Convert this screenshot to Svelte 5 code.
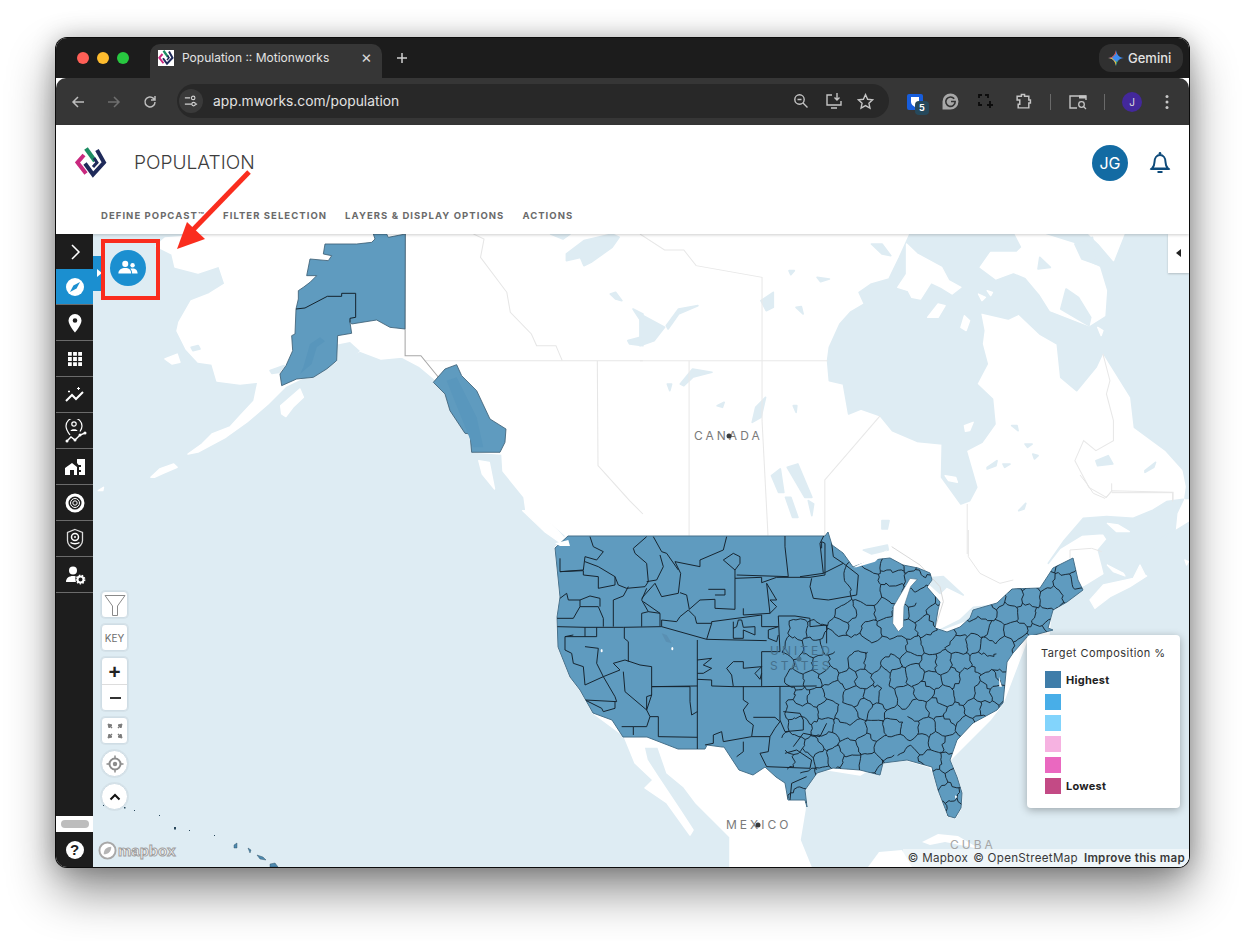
<script>
  const navItems = ['DEFINE POPCAST™', 'FILTER SELECTION', 'LAYERS & DISPLAY OPTIONS', 'ACTIONS'];

  const legend = [
    { color: '#3f7da9', label: 'Highest', tall: true },
    { color: '#48aee8', label: '' },
    { color: '#82d4fc', label: '' },
    { color: '#f6b2e1', label: '' },
    { color: '#ea68c0', label: '' },
    { color: '#c34a85', label: 'Lowest' }
  ];

  // coast outlines, in page pixels
  const land = '156,246 165,238 220,234 1190,234 1190,520 1060,600 1050,640 1027,640 1003,703 990,720 950,760 957,777 962,793 961,808 955,818 948,816 943,803 938,790 933,772 930,767 906,760 880,763 860,775 816,768 805,790 805,810 800,840 811,867 730,867 730,837 710,817 696,803 684,787 667,773 658,747 644,747 647,760 658,777 680,810 693,830 690,835 667,803 645,788 653,780 635,763 624,736 593,713 580,690 570,677 558,647 557,617 560,597 555,548 566,536 549,521 526,511 524,497 503,471 502,454 474,452 470,434 458,414 437,381 419,366 402,357 381,359 360,351 338,361 335,362 286,386 268,404 247,422 226,437 198,452 188,454 202,444 212,434 230,427 240,416 254,401 258,382 240,384 217,381 212,364 198,362 186,349 177,331 179,322 191,301 209,294 225,284 219,266 198,273 175,267 172,254';

  const usa = '568,536 825,536 828,532 832,545 843,553 853,567 872,560 890,558 903,565 918,568 930,573 932,580 927,587 940,602 938,610 935,628 947,632 960,627 970,618 973,610 997,603 1012,589 1040,588 1053,568 1073,558 1078,580 1083,590 1067,602 1053,610 1048,628 1053,630 1027,637 1013,653 1007,662 1003,703 997,710 973,723 957,740 950,760 957,777 962,793 961,808 955,818 948,816 943,803 938,790 933,772 932,767 907,760 883,763 880,775 860,770 833,768 817,773 805,790 807,807 805,800 788,800 785,783 776,777 765,767 753,775 739,770 724,747 722,747 707,745 705,749 678,749 647,737 623,737 612,720 593,713 580,690 570,677 558,647 557,617 560,597 555,548';

  const alaskaMain = '310,0 315,15 305,25 260,30 165,30 160,60 185,65 175,80 120,75 110,125 140,125 120,145 100,160 85,170 85,195 78,225 75,300 65,305 68,350 48,395 30,420 35,455 80,435 130,430 170,405 200,380 203,305 245,298 240,265 245,270 320,258 360,280 405,285 406,0 355,10 350,0';
  const alaskaLine = '78,225 105,222 172,187 215,187 215,178 257,178 257,250 240,253 240,265';
  const alaskaSouth = '490,445 525,405 560,392 575,425 620,470 660,555 708,585 705,625 690,655 605,655 600,600 585,598 540,530 525,480';

  // region borders of the western half, traced at 3x from (540,520)
  const westLines = [
    '50,320 135,322 250,322 365,320 365,300 410,305 420,290 445,270 465,290 470,310 515,310 515,305 665,285',
    '150,50 160,80 190,95 170,120 135,110 130,150 60,155 60,115',
    '60,155 130,152 130,165 175,170 175,205 225,195 225,170 175,140 135,125',
    '225,170 235,195 260,205 315,200 325,185 320,130 285,100 280,85 320,50',
    '340,50 365,95 380,100 415,150',
    '320,185 350,180 370,140 360,105',
    '345,190 365,230 415,220 422,160 405,125 480,140 480,120 550,90 560,50',
    '420,218 440,225 448,268 480,240 525,238 525,265 585,268 585,175 665,172 665,188 710,172 810,172 855,165 855,70 845,65 845,85',
    '585,150 550,120 580,100 600,110 600,130 585,150 585,175',
    '590,165 745,170 735,80 735,47',
    '505,208 555,208 555,225 525,225',
    '610,265 610,285 690,280 680,190 710,240 690,240 710,260 690,280',
    '60,235 80,220 85,240 120,240 120,260 175,260 190,295 190,320',
    '120,240 150,228 180,235 180,260',
    '50,295 100,295 120,260',
    '220,320 220,240 250,228 265,200',
    '305,320 305,280 325,275 305,240 320,205',
    '305,235 345,190',
    '310,245 360,280 360,318',
    '325,275 360,280',
    '135,322 135,350 170,350 170,322',
    '135,350 75,350 100,345',
    '75,350 75,390 95,400 100,430 130,440 135,495 190,470 225,530 230,545 135,540 185,565 190,575 225,565 225,545',
    '135,380 175,385 170,430 190,470 240,450 220,430 255,420 300,435 335,440 335,500 450,500',
    '253,322 253,355 265,365 265,425',
    '335,500 335,525 320,570 255,515 250,455',
    '335,525 320,530 320,570 330,590 355,590 355,650',
    '330,590 320,620 280,620 280,645',
    '245,620 280,620',
    '355,650 472,652',
    '472,360 472,688',
    '365,320 500,358 515,310',
    '500,358 680,362',
    '472,420 515,415 490,435 515,445 490,460 472,460',
    '335,500 472,498',
    '472,478 515,480 515,498 580,500 665,500',
    '450,500 450,545 455,585 472,575',
    '580,500 575,465 560,445 580,425 610,425 610,445 665,440',
    '665,395 665,500 830,498',
    '665,395 720,395 715,288 765,288 810,295 810,320 860,315 860,370',
    '580,305 580,355 610,355 610,330 645,345 645,320 610,322 605,300 595,300 590,320 580,325',
    '665,285 665,320 715,320 685,330 685,355 710,365 715,345',
    '665,440 645,460 660,478 665,460',
    '610,500 610,540 625,550 610,570 620,600 640,615 635,650 550,665 545,635 520,645 520,670 495,675',
    '640,592 705,592 720,605 705,625 690,650 635,650',
    '720,500 720,600 735,635 790,630 790,600 780,580 730,575',
    '610,665 610,695 590,710',
    '690,650 685,695 660,700 680,740 810,745',
    '735,700 770,690 815,720 810,745',
    '750,840 755,790 800,770',
    '760,680 790,640 840,650 860,610'
  ];

  // the dense eastern regions: wobbly voronoi cells, clipped to the coast
  let seed = 41;
  const rnd = () => {
    seed = (seed * 1664525 + 1013904223) % 4294967296;
    return seed / 4294967296;
  };
  const jit = (n) => (rnd() - 0.5) * n;

  function clipCell(poly, a, b) {
    const mx = (a[0] + b[0]) / 2;
    const my = (a[1] + b[1]) / 2;
    const side = (p) => (p[0] - mx) * (b[0] - a[0]) + (p[1] - my) * (b[1] - a[1]);
    const out = [];
    poly.forEach((p, i) => {
      const q = poly[(i + 1) % poly.length];
      const sp = side(p);
      const sq = side(q);
      if (sp <= 0) out.push(p);
      if (sp * sq < 0) {
        const t = sp / (sp - sq);
        out.push([p[0] + (q[0] - p[0]) * t, p[1] + (q[1] - p[1]) * t]);
      }
    });
    return out;
  }

  function wobble(a, b) {
    let d = `M${a[0].toFixed(1)} ${a[1].toFixed(1)}`;
    const steps = Math.max(2, Math.round(Math.hypot(b[0] - a[0], b[1] - a[1]) / 3.5));
    for (let s = 1; s <= steps; s++) {
      const t = s / steps;
      const w = s === steps ? 0 : 3.4;
      d += `L${(a[0] + (b[0] - a[0]) * t + jit(w)).toFixed(1)} ${(a[1] + (b[1] - a[1]) * t + jit(w)).toFixed(1)}`;
    }
    return d;
  }

  function regions() {
    const box = [[760, 525], [1100, 525], [1100, 835], [760, 835]];
    const pts = [];
    for (let j = 0; j < 19; j++) {
      for (let i = 0; i < 19; i++) {
        const x = 765 + i * 18 + (j % 2) * 9 + jit(11);
        const y = 530 + j * 16.5 + jit(10);
        // fewer, larger regions up on the northern plains
        if (x < 880 && y < 610 && (i + j) % 2) continue;
        pts.push([x, y]);
      }
    }
    const seen = new Set();
    let d = '';
    pts.forEach((a) => {
      let cell = box;
      pts.forEach((b) => {
        if (b !== a && Math.hypot(a[0] - b[0], a[1] - b[1]) < 90) cell = clipCell(cell, a, b);
      });
      cell.forEach((p, i) => {
        const q = cell[(i + 1) % cell.length];
        const mx = (p[0] + q[0]) / 2;
        const my = (p[1] + q[1]) / 2;
        const key = `${Math.round(mx)}_${Math.round(my)}`;
        if (seen.has(key)) return;
        seen.add(key);
        if (mx < 785 || (mx < 835 && my < 612) || mx > 1099 || my < 526 || my > 834) return;
        if (rnd() < 0.08) return;
        d += wobble(p, q);
      });
    });
    return d;
  }

  const eastLines = regions();

  const sideIcons = ['compass', 'pin', 'grid', 'trend', 'route', 'house', 'target', 'shield', 'usergear'];
</script>

{#snippet logo()}
  <polyline points="9,8 2.5,15.5 11,26.5" fill="none" stroke="#c9297f" stroke-width="4" />
  <polyline points="11,1.5 20,14" fill="none" stroke="#1c8c62" stroke-width="4.4" />
  <polyline points="22,3 29,15.5 18,27.5 10,16.5" fill="none" stroke="#1f2a5a" stroke-width="4" />
  <polyline points="19,11 22,15.5 18,20" fill="none" stroke="#1f2a5a" stroke-width="3" />
{/snippet}

<div class="page">
  <div class="window">
    <div class="tabstrip">
      <div class="lights">
        <span class="light red"></span>
        <span class="light amber"></span>
        <span class="light green"></span>
      </div>
      <div class="tab">
        <svg class="favicon" viewBox="0 0 32 32" width="16" height="16">
          <rect width="32" height="32" fill="#fff" />
          {@render logo()}
        </svg>
        <span class="tab-title">Population :: Motionworks</span>
        <span class="tab-close">×</span>
      </div>
      <svg class="newtab" viewBox="0 0 12 12" width="12" height="12">
        <path d="M6 1v10M1 6h10" stroke="#d0d0d0" stroke-width="1.5" />
      </svg>
      <div class="gemini">
        <svg viewBox="0 0 16 16" width="16" height="16">
          <path d="M8 0C8.6 4.5 11 7.4 16 8 11 8.6 8.6 11.5 8 16 7.4 11.5 5 8.6 0 8 5 7.4 7.4 4.5 8 0Z" fill="#3f8cf0" />
          <path d="M8 0C7.4 4.5 5 7.4 0 8L4 8 8 4Z" fill="#e8533f" />
          <path d="M0 8C5 8.6 7.4 11.5 8 16L8 12 4 8Z" fill="#f3bd2e" />
          <path d="M8 16C8.6 11.5 11 8.6 12 8L8 12Z" fill="#37a853" />
        </svg>
        <span>Gemini</span>
      </div>
    </div>

    <div class="toolbar">
      <svg class="tool back" viewBox="0 0 16 16" width="16" height="16">
        <path d="M14 8H3M8 3L3 8l5 5" fill="none" stroke="#bdbdbd" stroke-width="1.5" />
      </svg>
      <svg class="tool fwd" viewBox="0 0 16 16" width="16" height="16">
        <path d="M2 8h11M8 3l5 5-5 5" fill="none" stroke="#6f6f6f" stroke-width="1.5" />
      </svg>
      <svg class="tool reload" viewBox="0 0 16 16" width="16" height="16">
        <path d="M13 8a5 5 0 1 1-1.5-3.6L13 6M13 2v4H9" fill="none" stroke="#bdbdbd" stroke-width="1.5" />
      </svg>
      <div class="omnibox">
        <span class="tune">
          <svg viewBox="0 0 16 16" width="14" height="14">
            <path d="M1 4.500h6M1 11.500h8M13 11.500h2" stroke="#d0d0d0" stroke-width="1.300" />
            <circle cx="10.500" cy="4.500" r="2" fill="none" stroke="#d0d0d0" stroke-width="1.300" />
            <circle cx="11" cy="11.500" r="2" fill="none" stroke="#d0d0d0" stroke-width="1.300" />
          </svg>
        </span>
        <span class="url">app.mworks.com/population</span>
        <div class="omni-icons">
          <svg viewBox="0 0 16 16" width="16" height="16">
            <circle cx="6.500" cy="6.500" r="4.700" fill="none" stroke="#c4c4c4" stroke-width="1.400" />
            <path d="M10 10l4.500 4.500M4.500 6.500h4" stroke="#c4c4c4" stroke-width="1.400" />
          </svg>
          <svg class="install" viewBox="0 0 18 18" width="18" height="18">
            <path d="M7 3H2v10h14V9M6 16h6" fill="none" stroke="#c4c4c4" stroke-width="1.400" />
            <path d="M12 1v7M9.500 5.500L12 8l2.500-2.500" fill="none" stroke="#c4c4c4" stroke-width="1.400" />
          </svg>
          <svg viewBox="0 0 16 16" width="17" height="17">
            <path d="M8 1.500l2 4.400 4.700.5-3.500 3.200 1 4.700L8 11.900l-4.200 2.400 1-4.700L1.300 6.400 6 5.900Z" fill="none" stroke="#c4c4c4" stroke-width="1.300" />
          </svg>
        </div>
      </div>
      <div class="ext-icons">
        <span class="ext bitwarden">
          <svg viewBox="0 0 16 16" width="16" height="16">
            <rect width="16" height="16" rx="2" fill="#175ddc" />
            <path d="M4 3h8v5c0 2-2 4-4 5-2-1-4-3-4-5Z" fill="#fff" />
          </svg>
          <span class="badge">5</span>
        </span>
        <svg viewBox="0 0 16 16" width="17" height="17">
          <path d="M8 .5a7.500 7.500 0 1 1 0 15H.5V8A7.500 7.500 0 0 1 8 .5Z" fill="#a8a8a8" />
          <path d="M11.500 5.500A4.400 4.400 0 1 0 12.400 8H8.500" fill="none" stroke="#333" stroke-width="1.500" />
        </svg>
        <svg viewBox="0 0 16 16" width="16" height="16">
          <path d="M1 4V1h3M7 1h3v3M1 8v3h3M12 7v7M9 11h6" fill="none" stroke="#0c0c0c" stroke-width="1.800" />
        </svg>
        <svg class="puzzle" viewBox="0 0 16 16" width="17" height="17">
          <path d="M2 3h4V1.500h3V3h4v3.500h1.500v3H13V14H3v-3.500H4.500v-4H2Z" fill="none" stroke="#c4c4c4" stroke-width="1.400" />
        </svg>
        <span class="sep first"></span>
        <svg class="tabsearch" viewBox="0 0 18 16" width="18" height="16">
          <path d="M8 14H1V2h16v4" fill="none" stroke="#c4c4c4" stroke-width="1.400" />
          <rect x="10" y="1.500" width="7" height="3" fill="#c4c4c4" />
          <circle cx="12.500" cy="10.500" r="2.800" fill="none" stroke="#c4c4c4" stroke-width="1.300" />
          <path d="M14.500 12.500L17 15" stroke="#c4c4c4" stroke-width="1.300" />
        </svg>
        <span class="sep second"></span>
        <span class="profile">J</span>
        <svg class="kebab" viewBox="0 0 4 16" width="4" height="16">
          <circle cx="2" cy="2.500" r="1.500" fill="#c8c8c8" />
          <circle cx="2" cy="8" r="1.500" fill="#c8c8c8" />
          <circle cx="2" cy="13.500" r="1.500" fill="#c8c8c8" />
        </svg>
      </div>
    </div>

    <header class="app-head">
      <div class="head-top">
        <svg class="logo" viewBox="0 0 32 32" width="32" height="32">
          {@render logo()}
        </svg>
        <h1>POPULATION</h1>
        <div class="head-right">
          <span class="avatar">JG</span>
          <svg class="bell" viewBox="0 0 24 24" width="24" height="24">
            <path d="M4 18.500c1.500-1.500 2.500-3 2.500-6.500 0-4 2.200-7 5.500-7s5.500 3 5.500 7c0 3.500 1 5 2.500 6.500Z" fill="none" stroke="#0d4a7a" stroke-width="2" />
            <path d="M2.500 19h19" stroke="#0d4a7a" stroke-width="2" />
            <circle cx="12" cy="3.200" r="1.300" fill="#0d4a7a" />
            <path d="M9.500 22h5" stroke="#0d4a7a" stroke-width="2" />
          </svg>
        </div>
      </div>
      <nav class="app-nav">
        {#each navItems as item}
          <span>{item}</span>
        {/each}
      </nav>
    </header>

    <div class="workspace">
      <aside class="sidebar">
        <div class="side-item toggle">
          <svg viewBox="0 0 20 20" width="20" height="20">
            <path d="M7 3l7 7-7 7" fill="none" stroke="#fff" stroke-width="1.500" />
          </svg>
        </div>
        {#each sideIcons as name}
          <div class="side-item" class:active={name === 'compass'}>
            <svg viewBox="0 0 24 24" width="24" height="24">
              {#if name === 'compass'}
                <circle cx="12" cy="12" r="9" fill="#fff" />
                <path d="M17 7l-3.400 6.600L7 17l3.400-6.600Z" fill="#1b8fd0" />
              {:else if name === 'pin'}
                <path fill-rule="evenodd" d="M12 3a6.500 6.500 0 0 0-6.500 6.500C5.500 14 12 21.500 12 21.500S18.500 14 18.500 9.500A6.500 6.500 0 0 0 12 3Zm0 4.200a2.300 2.300 0 1 1 0 4.600 2.300 2.300 0 0 1 0-4.600Z" fill="#fff" />
              {:else if name === 'grid'}
                <path d="M5 5h3.800v3.800H5zM10.100 5h3.800v3.800h-3.800zM15.200 5H19v3.800h-3.800zM5 10.100h3.800v3.800H5zM10.100 10.100h3.800v3.800h-3.800zM15.200 10.100H19v3.800h-3.800zM5 15.200h3.800V19H5zM10.100 15.200h3.800V19h-3.800zM15.200 15.200H19V19h-3.800z" fill="#fff" />
              {:else if name === 'trend'}
                <path d="M3 18l6-6 4 4 7-7" fill="none" stroke="#fff" stroke-width="2" />
                <path d="M14 5.500h3M15.500 4v3M5 8.500h2M6 7.500v2" stroke="#fff" stroke-width="1" />
              {:else if name === 'route'}
                <path d="M7 16C4 12 3 10 3 7a8 8 0 0 1 16 0c0 2-1 4-2 5.500" fill="none" stroke="#fff" stroke-width="1.200" />
                <circle cx="11" cy="5" r="2.200" fill="none" stroke="#fff" stroke-width="1.200" />
                <path d="M7.500 12c0-2.500 7-2.500 7 0Z" fill="#fff" />
                <path d="M4 22l4-4 4 3 5-5 5-2" fill="none" stroke="#fff" stroke-width="1.400" />
                <circle cx="4" cy="22" r="1.500" fill="#fff" />
                <circle cx="12" cy="21" r="1.500" fill="#fff" />
                <circle cx="17" cy="16" r="1.500" fill="#fff" />
                <circle cx="22" cy="14" r="1.500" fill="#fff" />
              {:else if name === 'house'}
                <path d="M2 13l7-5 5 4v8h-3v-5H7v5H2ZM14 4h8v16h-6v-3h2v-2h-2v-3h2v-2h-2.500L14 8Z" fill="#fff" />
              {:else if name === 'target'}
                <circle cx="12" cy="12" r="8" fill="none" stroke="#fff" stroke-width="3" />
                <circle cx="12" cy="12" r="4.500" fill="none" stroke="#fff" stroke-width="1" />
                <circle cx="12" cy="12" r="2.200" fill="none" stroke="#fff" stroke-width="1" />
              {:else if name === 'shield'}
                <path d="M12 2.500l7.500 3v8c0 4-4 7-7.500 8.500-3.500-1.500-7.500-4.500-7.500-8.500v-8Z" fill="none" stroke="#ddd" stroke-width="1.300" />
                <circle cx="12" cy="10" r="3.500" fill="none" stroke="#fff" stroke-width="1.500" />
                <circle cx="12" cy="10" r="1" fill="#fff" />
                <path d="M7.500 15.500c2 1.500 7 1.500 9 0" fill="none" stroke="#fff" stroke-width="1.500" />
              {:else}
                <circle cx="10" cy="7.500" r="4" fill="#fff" />
                <path d="M3 19c0-4 3-6 7-6 1 0 2 .1 2.800.4-.7 1.700-.6 3.800.2 5.600Z" fill="#fff" />
                <circle cx="17.500" cy="16.500" r="3" fill="none" stroke="#fff" stroke-width="2" />
                <circle cx="17.500" cy="16.500" r="4.300" fill="none" stroke="#fff" stroke-width="1.300" stroke-dasharray="1.500 1.500" />
              {/if}
            </svg>
          </div>
        {/each}
        <div class="side-spacer"></div>
        <div class="side-scroll"><span></span></div>
        <div class="side-help">
          <span>?</span>
        </div>
      </aside>

      <main class="map">
        <svg class="map-art" viewBox="93 234 1097 633" width="1097" height="633">
          <defs>
            <clipPath id="us-clip">
              <polygon points={usa} />
            </clipPath>
          </defs>

          <rect x="93" y="234" width="1097" height="633" fill="#deecf3" />
          <polygon points={land} fill="#fff" stroke="#fff" stroke-width="1.500" stroke-linejoin="round" />

          <!-- Cook Inlet -->
          <polygon points="335,345 350,342 360,351 345,364 337,362" fill="#deecf3" />

          <!-- Hudson Bay, the Arctic and the Canadian lakes -->
          <g transform="translate(640 234) scale(.3507 .3333)">
            <polygon class="water" points="535,380 540,340 570,270 600,235 640,210 625,175 660,150 710,135 740,70 770,0 1568,0 1568,730 1500,650 1410,580 1400,490 1320,355 1300,400 1245,470 1200,430 1190,330 1140,300 1080,240 1050,255 970,235 980,290 975,330 990,390 960,450 1005,495 1012,570 975,625 930,650 960,760 940,800 915,810 860,730 862,630 790,622 720,590 685,545 630,525 595,540 580,450 540,440" />
            <g class="ice">
              <polygon points="760,30 790,60 860,100 880,140 915,160 890,180 860,160 830,145 800,195 775,190 765,170 735,160 760,120" />
              <polygon points="820,250 850,210 870,215 850,250" />
              <polygon points="915,280 925,245 940,260 930,290" />
              <polygon points="970,100 1000,55 1075,55 1090,40 1070,0 1150,0 1240,30 1260,75 1310,100 1330,170 1325,245 1280,275 1170,230 1140,180 1100,130 1065,115 1015,135" />
              <polygon points="1280,0 1380,0 1350,80 1310,30" />
              <polygon points="965,180 985,190 975,200" />
              <polygon points="990,170 1005,175 1000,185" />
              <polygon points="1305,280 1320,290 1315,305" />
              <polygon points="925,575 950,565 940,590 928,592" />
              <polygon points="870,725 900,730 905,745 880,740" />
            </g>
            <g class="water">
              <polygon points="1215,165 1250,190 1285,250 1280,275 1200,225" />
              <polygon points="1140,70 1170,100 1135,105" />
              <polygon points="1240,30 1290,10 1300,90 1260,75" />
              <polygon points="660,30 690,30 715,65 690,60" />
              <polygon points="0,240 70,280 40,320 0,335" />
              <polygon points="75,275 110,225 165,215 110,240 80,285" />
              <polygon points="115,450 150,405 205,415 150,430 125,455" />
              <polygon points="78,450 90,450 85,470" />
              <polygon points="345,200 380,175 380,220 360,230" />
              <polygon points="505,130 540,135 515,143" />
              <polygon points="425,110 440,110 430,122" />
              <polygon points="445,220 460,218 465,240" />
              <polygon points="220,515 240,505 235,520" />
              <polygon points="330,520 358,490 345,550 320,565" />
              <polygon points="437,515 447,515 445,535" />
              <polygon points="420,700 450,690 490,790 470,790" />
              <polygon points="375,725 400,705 410,775 395,775" />
              <polygon points="415,790 430,790 450,850 435,850" />
              <polygon points="480,800 495,810 490,845" />
              <polygon points="690,860 710,860 705,885 690,885" />
              <polygon points="990,700 1018,680 1015,695 990,705" />
              <polygon points="1035,690 1055,690 1040,700" />
              <polygon points="1060,575 1075,575 1078,590" />
              <polygon points="1098,630 1118,630 1105,640" />
              <polygon points="1120,660 1135,665 1125,675" />
              <polygon points="1300,680 1335,665 1348,690 1305,695" />
              <polygon points="1440,710 1470,685 1465,700 1440,715" />
              <polygon points="1080,830 1100,808 1095,825" />
            </g>
            <g fill="none" stroke="#e8e8e8" stroke-width="3">
              <path d="M1320,360 1340,440 1330,480 1350,560 1350,620 1300,650 1265,620 1240,680 1280,760 1330,790 1345,770 1520,775 1520,800" />
              <path d="M0,380 535,380" />
              <path d="M140,380 140,905" />
              <path d="M0,0 70,48 125,48 160,95 348,130 348,560 365,905" />
              <path d="M685,545 527,738 527,905" />
              <path d="M933,810 933,960" />
            </g>
          </g>
          <g transform="translate(93 234) scale(.3507 .3333)">
            <g class="water">
              <polygon points="1350,60 1400,20 1480,0 1500,10 1480,40 1420,85 1400,95 1390,70 1350,80" />
              <polygon points="1305,0 1360,0 1340,15" />
              <polygon points="1475,180 1490,175 1508,200 1490,195" />
              <polygon points="1525,320 1560,310 1568,335 1530,330" />
              <polygon points="1540,225 1568,240 1568,270" />
              <polygon points="505,410 545,395 530,415 510,418" />
              <polygon points="280,340 300,335 305,345 285,350" />
            </g>
            <g class="ice">
              <polygon points="205,375 240,360 248,385 225,390" />
              <polygon points="535,515 590,465 600,490 570,520 550,548 538,540" />
              <polygon points="165,730 190,705 230,690 240,700 200,718 175,730" />
              <polygon points="15,770 30,760 28,770" />
              <polygon points="1100,680 1130,685 1145,765 1110,720" />
              <polygon points="1225,830 1260,830 1300,860 1350,920 1345,935 1290,895" />
            </g>
            <g fill="none" stroke="#e6e6e6" stroke-width="3">
              <path d="M1085,0 1115,15 1105,70 1180,175 1190,235 1250,300 1265,335 1320,335 1338,380" />
              <path d="M945,380 1568,380" />
              <path d="M1438,380 1440,695 1530,800 1568,840" />
            </g>
            <path d="M890,0V365L935,365 985,430" fill="none" stroke="#a8a8a8" stroke-width="3" />
          </g>

          <!-- the Atlantic side -->
          <g transform="translate(1020 470) scale(.3333)">
            <polygon class="water" points="85,280 130,215 190,145 260,140 340,145 400,120 440,95 490,88 470,130 465,180 410,215 395,250 440,250 510,260 510,510 90,510 100,400 185,370 190,352 258,330 248,290 235,240 262,208 250,190 185,195 120,235" />
            <polygon class="water" points="490,0 510,0 510,85 495,85 500,50" />
            <g class="ice">
              <polygon points="262,160 295,165 328,185 290,185" />
              <polygon points="375,315 360,285 340,325 250,345 210,390 225,415 270,380 330,350 380,318" />
              <polygon points="262,285 310,310 315,318 280,305" />
              <polygon points="495,270 505,275 500,285" />
            </g>
            <path d="M180,15 200,40 220,70 255,85 275,65 275,40M275,68 458,68 458,95" fill="none" stroke="#e6e6e6" stroke-width="3" />
            <path d="M150,265 150,240 215,235 245,245" fill="none" stroke="#e6e6e6" stroke-width="3" />
          </g>

          <!-- Great Lakes water north of the coast -->
          <g transform="translate(800 530) scale(.3333)">
            <g class="water">
              <polygon points="190,60 262,45 265,60 215,72" />
              <polygon points="370,145 430,140 490,195 440,170 420,190" />
              <polygon points="420,300 515,265 590,235 590,225 520,232 480,270" />
            </g>
            <path d="M275,50 360,105 420,170 430,215 405,295" fill="none" stroke="#d8d8d8" stroke-width="3" />
            <path d="M505,0 505,80 540,130 600,160 640,150" fill="none" stroke="#e6e6e6" stroke-width="3" />
          </g>

          <!-- Yucatan and Cuba -->
          <polygon points="868,867 879,852 902,850 912,867" fill="#fff" />
          <polygon points="922,842 938,834 958,836 980,849 965,846 945,842 930,845" fill="#fff" />

          <!-- the choropleth -->
          <g transform="translate(270 234) scale(.3333)">
            <polygon points={alaskaMain} fill="#5f9bbf" stroke="#3d5f75" stroke-width="2.500" />
            <polygon points="100,400 120,330 150,310 165,322 140,340 125,390 90,420" fill="#5896bc" />
            <polyline points={alaskaLine} fill="none" stroke="#14222c" stroke-width="3" />
            <polygon points={alaskaSouth} fill="#5f9bbf" stroke="#3d5f75" stroke-width="2.500" />
            <polygon points="530,440 560,430 620,550 640,640 610,640" fill="#5997bd" />
          </g>

          <polygon points={usa} fill="#5f9bbf" stroke="#47718b" stroke-width="1" />
          <g clip-path="url(#us-clip)">
            <path d={eastLines} fill="none" stroke="#16242f" stroke-width=".95" />
            <g transform="translate(540 520) scale(.3333)" fill="none" stroke="#16242f" stroke-width="3">
              {#each westLines as line}
                <polyline points={line} />
              {/each}
            </g>
            <g transform="translate(800 530) scale(.3333)" fill="none" stroke="#16242f" stroke-width="3">
              <polyline points="70,130 60,40 80,0" />
              <polyline points="35,145 30,170 40,205 85,210 170,195 175,135 130,100 100,80 95,40" />
              <polyline points="0,140 70,130 130,100" />
            </g>
          </g>
          <g transform="translate(800 530) scale(.3333)">
            <polygon points="330,145 280,230 278,280 295,305 310,290 312,230 332,170 352,148" fill="#fff" stroke="#47718b" stroke-width="2" />
            <polygon points="160,112 215,85 262,60 225,95 170,112" fill="#fff" />
            <polygon points="465,796 472,800 466,806" fill="#fff" />
            <polygon points="597,440 606,470 598,470" fill="#fff" />
          </g>
          <g transform="translate(540 520) scale(.3333)" fill="#fff">
            <polygon points="45,70 85,60 90,78 60,78" />
            <ellipse cx="185" cy="392" rx="3" ry="5" />
            <ellipse cx="397" cy="386" rx="3" ry="5" />
          </g>
          <g transform="translate(540 520) scale(.3333)" fill="#5a90b3">
            <polygon points="365,340 380,345 395,370 378,365" />
          </g>

          <!-- Hawaii and the small islands -->
          <g fill="#4e89ae" stroke="#27465a" stroke-width=".4">
            <polygon points="234,845 237,843 237,848 234,848" />
            <polygon points="248,848 251,850 250,853" />
            <polygon points="257,855 263,857 266,860 260,859" />
            <polygon points="270,864 275,863 278,867 270,867" />
          </g>
          <g fill="#27465a">
            <rect x="103" y="805" width="1" height="1" />
            <rect x="124" y="807" width="1.500" height="1.500" />
            <rect x="134" y="810" width="1" height="1" />
            <rect x="159" y="815" width="1" height="1" />
            <rect x="174" y="827" width="2" height="2.500" />
            <rect x="189" y="830" width="1" height="1" />
            <rect x="214" y="835" width="1" height="1" />
          </g>

          <!-- place names -->
          <text class="place" x="694" y="440">CANADA</text>
          <circle cx="729" cy="436" r="2.500" fill="#3a3a3a" />
          <text class="place" x="726" y="829">MEXICO</text>
          <circle cx="758" cy="825" r="2.500" fill="#3a3a3a" />
          <text class="place us" x="770" y="655">UNITED</text>
          <text class="place us" x="770" y="670">STATES</text>
          <circle cx="799" cy="659" r="2.500" fill="#47718b" />
          <text class="place light" x="950" y="849">CUBA</text>
        </svg>

        <div class="expand-tab"></div>
        <button class="target-btn" aria-label="Target population">
          <svg viewBox="0 0 24 24" width="22" height="22">
            <circle cx="9" cy="7.500" r="3.300" fill="#fff" />
            <circle cx="17" cy="9" r="2.400" fill="#fff" />
            <path d="M1.500 18c0-4 3.500-6 7.500-6s6.500 2 6.500 6ZM16.500 18c0-2-.7-3.800-2-5.100 .8-.3 1.600-.4 2.500-.4 3.300 0 5.500 2 5.500 5.500Z" fill="#fff" />
          </svg>
        </button>
        <div class="red-box"></div>

        <div class="collapse-tab"></div>

        <div class="controls">
          <div class="ctl">
            <svg viewBox="0 0 24 24" width="24" height="24">
              <path d="M2 2.500h20L14.500 13v9.500h-5V13Z" fill="none" stroke="#8a8a8a" stroke-width="1" />
            </svg>
          </div>
          <div class="ctl key">KEY</div>
          <div class="ctl zoom">
            <span class="plus">+</span>
            <span class="minus"></span>
          </div>
          <div class="ctl">
            <svg viewBox="0 0 20 20" width="20" height="20">
              <path d="M3 3l4 1-3 3ZM17 3l-4 1 3 3ZM3 17l4-1-3-3ZM17 17l-4-1 3-3Z" fill="#7b7b7b" stroke="#7b7b7b" />
              <path d="M4 4l3 3M16 4l-3 3M4 16l3-3M16 16l-3-3" stroke="#7b7b7b" stroke-width="1.500" />
            </svg>
          </div>
          <div class="ctl round">
            <svg viewBox="0 0 20 20" width="20" height="20">
              <circle cx="10" cy="10" r="5.500" fill="none" stroke="#8c8c8c" stroke-width="2" />
              <circle cx="10" cy="10" r="2.200" fill="#8c8c8c" />
              <path d="M10 1.500v3M10 15.500v3M1.500 10h3M15.500 10h3" stroke="#8c8c8c" stroke-width="1.500" />
            </svg>
          </div>
          <div class="ctl round">
            <svg viewBox="0 0 14 10" width="14" height="10">
              <path d="M2.500 7.500L7 3l4.500 4.500" fill="none" stroke="#111" stroke-width="2" />
            </svg>
          </div>
        </div>

        <div class="mapbox">
          <svg viewBox="0 0 20 20" width="19" height="19">
            <circle cx="10" cy="10" r="8.500" fill="#fff" stroke="#a8a8a8" stroke-width="2" />
            <path d="M6 14c0-5 3-8 8-8 0 5-3 8-8 8Z" fill="#b5b5b5" />
          </svg>
          <span>mapbox</span>
        </div>

        <div class="legend">
          <div class="legend-title">Target Composition %</div>
          {#each legend as row}
            <div class="legend-row" class:tall={row.tall}>
              <span class="swatch" style="background: {row.color}"></span>
              <span class="legend-label">{row.label}</span>
            </div>
          {/each}
        </div>

        <div class="attrib">
          <span>© Mapbox</span>
          <span>© OpenStreetMap</span>
          <b>Improve this map</b>
        </div>
      </main>
    </div>

    <!-- the annotation arrow drawn over the screenshot -->
    <svg class="annot" viewBox="0 0 300 300" width="300" height="300">
      <path d="M193 134L132 197" stroke="#fa2d1e" stroke-width="5" fill="none" />
      <polygon points="121,211 131,184 149,201" fill="#fa2d1e" />
    </svg>
  </div>
</div>

<style>
  :global(body) {
    margin: 0;
    background: #fff;
    font-family: "Liberation Sans", Arial, sans-serif;
  }

  .page {
    width: 1245px;
    height: 941px;
    padding: 38px 0 0 56px;
    box-sizing: border-box;
    overflow: hidden;
    background: #fff;
  }

  .window {
    width: 1133px;
    height: 829px;
    border-radius: 11px;
    overflow: hidden;
    position: relative;
    display: flex;
    flex-direction: column;
    background: #fff;
    box-shadow: 0 0 0 1px #0c0c0c, 0 24px 48px rgba(0, 0, 0, 0.46), 0 0 24px rgba(0, 0, 0, 0.26);
  }

  .annot {
    position: absolute;
    left: 0;
    top: 0;
    z-index: 5;
    pointer-events: none;
  }

  .tabstrip {
    height: 40px;
    flex: none;
    display: flex;
    align-items: flex-end;
    background: #1c1c1c;
    position: relative;
  }

  .lights {
    display: flex;
    gap: 8px;
    margin: 0 0 14px 21px;
  }

  .light {
    width: 12px;
    height: 12px;
    border-radius: 50%;
  }

  .red { background: #ff5f57; }
  .amber { background: #febc2e; }
  .green { background: #28c840; }

  .tab {
    width: 232px;
    height: 34px;
    margin-left: 21px;
    background: #363636;
    border-radius: 10px 10px 0 0;
    display: flex;
    align-items: center;
    box-sizing: border-box;
    padding: 0 8px 7px;
    gap: 8px;
    color: #e3e3e3;
    font-family: Inter, sans-serif;
    font-size: 12px;
  }

  .tab-title {
    flex: 1;
    white-space: nowrap;
  }

  .tab-close {
    font-size: 17px;
    line-height: 1;
    color: #d8d8d8;
    margin-right: 2px;
  }

  .newtab {
    margin: 0 0 14px 14px;
  }

  .gemini {
    position: absolute;
    right: 6px;
    top: 6px;
    width: 84px;
    height: 28px;
    box-sizing: border-box;
    border-radius: 12px;
    background: #303030;
    display: flex;
    align-items: center;
    gap: 4px;
    padding-left: 9px;
    color: #e3e3e3;
    font-family: Inter, sans-serif;
    font-size: 13px;
    font-weight: 500;
  }

  .toolbar {
    height: 47px;
    flex: none;
    display: flex;
    align-items: center;
    background: #363636;
    border-radius: 10px 10px 0 0;
    padding-left: 14px;
  }

  .tool {
    flex: none;
    margin-right: 20px;
  }

  .toolbar .reload {
    margin-right: 19px;
  }

  .omnibox {
    width: 712px;
    height: 34px;
    flex: none;
    margin-top: -1px;
    border-radius: 17px;
    background: #282828;
    display: flex;
    align-items: center;
    padding: 0 15px 0 2px;
    box-sizing: border-box;
  }

  .tune {
    width: 24px;
    height: 24px;
    border-radius: 50%;
    background: #3a3a3a;
    display: flex;
    align-items: center;
    justify-content: center;
    flex: none;
  }

  .url {
    margin: -1px 0 0 10px;
    flex: 1;
    color: #e2e2e2;
    font-family: Inter, sans-serif;
    font-size: 13.8px;
  }

  .omni-icons {
    display: flex;
    align-items: center;
    gap: 16px;
  }

  .install {
    margin-right: -2px;
  }

  .ext-icons {
    display: flex;
    align-items: center;
    margin-left: 18px;
    gap: 19px;
  }

  .puzzle {
    margin-left: 2px;
  }

  .sep.first {
    margin-left: -1px;
  }

  .tabsearch {
    margin-left: -1px;
  }

  .sep.second {
    margin-left: -2px;
  }

  .ext {
    position: relative;
    display: flex;
  }

  .badge {
    position: absolute;
    left: 8px;
    top: 7px;
    width: 14px;
    height: 14px;
    border-radius: 4px;
    background: #26495c;
    color: #fff;
    font-family: Inter, sans-serif;
    font-size: 9px;
    font-weight: 700;
    line-height: 14px;
    text-align: center;
  }

  .sep {
    width: 1px;
    height: 16px;
    background: #6a6a6a;
  }

  .profile {
    width: 20px;
    height: 20px;
    margin-left: -2px;
    border-radius: 50%;
    background: #43289b;
    color: #ddd;
    font-family: Inter, sans-serif;
    font-size: 10px;
    line-height: 20px;
    text-align: center;
  }

  .kebab {
    margin-left: 4px;
  }

  .app-head {
    height: 109px;
    flex: none;
    position: relative;
    z-index: 2;
    background: #fff;
    box-shadow: 0 1px 3px rgba(0, 0, 0, 0.2);
  }

  .head-top {
    height: 75px;
    display: flex;
    align-items: center;
    padding: 0 17px 0 19px;
    box-sizing: border-box;
  }

  .logo {
    margin-top: 1px;
  }

  h1 {
    margin: 0 0 0 27px;
    font-family: Inter, sans-serif;
    font-size: 19.1px;
    font-weight: 300;
    color: #3d3d3d;
    flex: 1;
    line-height: 1;
  }

  .head-right {
    display: flex;
    align-items: center;
    gap: 20px;
  }

  .bell {
    margin-top: -2px;
  }

  .avatar {
    width: 36px;
    height: 36px;
    border-radius: 50%;
    background: #136ba3;
    color: #fff;
    font-family: Inter, sans-serif;
    font-size: 16px;
    line-height: 36px;
    text-align: center;
  }

  .app-nav {
    display: flex;
    gap: 18px;
    padding-left: 45px;
    margin-top: 10px;
    color: #6a6a6a;
    font-family: Inter, sans-serif;
    font-size: 9.5px;
    font-weight: 700;
    letter-spacing: 1.06px;
    line-height: 12px;
  }

  .workspace {
    flex: 1;
    min-height: 0;
    display: flex;
  }

  .sidebar {
    width: 37px;
    flex: none;
    display: flex;
    flex-direction: column;
    background: #1d1d1d;
    position: relative;
    z-index: 1;
  }

  .side-item {
    height: 36px;
    flex: none;
    box-sizing: border-box;
    border-bottom: 1px solid #6b6b6b;
    display: flex;
    align-items: center;
    justify-content: center;
  }

  .side-item.toggle {
    height: 35px;
    border-bottom: 0;
  }

  .side-item.active {
    background: #1b8fd0;
  }

  .side-spacer {
    flex: 1;
  }

  .side-scroll {
    height: 16px;
    background: #fff;
    display: flex;
    align-items: center;
    justify-content: center;
    margin-bottom: 1px;
  }

  .side-scroll span {
    width: 28px;
    height: 8px;
    border-radius: 4px;
    background: #bdbdbd;
  }

  .side-help {
    height: 34px;
    display: flex;
    align-items: center;
    justify-content: center;
  }

  .side-help span {
    width: 18px;
    height: 18px;
    border-radius: 50%;
    background: #fff;
    color: #1d1d1d;
    font-size: 15px;
    font-weight: 700;
    line-height: 18px;
    text-align: center;
  }

  .map {
    flex: 1;
    position: relative;
    overflow: hidden;
    font-family: Inter, sans-serif;
  }

  .map-art {
    display: block;
  }

  .water {
    fill: #deecf3;
    stroke: #deecf3;
    stroke-width: 5;
    stroke-linejoin: round;
  }

  .ice {
    fill: #fff;
    stroke: #fff;
    stroke-width: 4;
    stroke-linejoin: round;
  }

  .place {
    font-size: 12px;
    letter-spacing: 3px;
    fill: #7a7a7a;
    font-family: Inter, sans-serif;
  }

  .place.us {
    fill: #45708c;
  }

  .place.light {
    fill: #a5a5a5;
  }

  .expand-tab {
    position: absolute;
    left: 0;
    top: 22px;
    width: 10px;
    height: 35px;
    background: #1b8fd0;
  }

  .expand-tab::after {
    content: '';
    position: absolute;
    left: 4px;
    top: 13px;
    border: 4px solid transparent;
    border-left: 5px solid #fff;
    border-right: 0;
  }

  .target-btn {
    position: absolute;
    left: 17px;
    top: 16px;
    width: 36px;
    height: 36px;
    padding: 0;
    border: 0;
    border-radius: 50%;
    background: #1b8fd0;
    display: flex;
    align-items: center;
    justify-content: center;
  }

  .red-box {
    position: absolute;
    left: 8px;
    top: 5px;
    width: 59px;
    height: 61px;
    box-sizing: border-box;
    border: 4px solid #fa2d1e;
    z-index: 3;
  }

  .collapse-tab {
    position: absolute;
    right: 0;
    top: 0;
    width: 21px;
    height: 39px;
    background: #fff;
    box-shadow: 0 1px 2px rgba(0, 0, 0, 0.2);
  }

  .collapse-tab::after {
    content: '';
    position: absolute;
    left: 8px;
    top: 15px;
    border: 4.500px solid transparent;
    border-right: 5px solid #222;
    border-left: 0;
  }

  .controls {
    position: absolute;
    left: 8px;
    top: 357px;
    display: flex;
    flex-direction: column;
    gap: 6px;
  }

  .ctl {
    width: 27px;
    height: 27px;
    box-sizing: border-box;
    background: #fff;
    border: 1px solid #cfdde5;
    border-radius: 4px;
    display: flex;
    align-items: center;
    justify-content: center;
    box-shadow: 0 0 0 1px rgba(0, 0, 0, 0.04);
  }

  .key {
    font-size: 10px;
    color: #6d6d6d;
  }

  .zoom {
    height: 54px;
    flex-direction: column;
  }

  .plus {
    height: 26px;
    width: 100%;
    text-align: center;
    font-size: 21px;
    font-weight: 600;
    line-height: 26px;
    color: #222;
    border-bottom: 1px solid #ddd;
  }

  .minus {
    height: 26px;
    width: 100%;
    position: relative;
  }

  .minus::after {
    content: '';
    position: absolute;
    left: 8px;
    top: 12px;
    width: 11px;
    height: 2px;
    background: #333;
  }

  .round {
    border-radius: 50%;
  }

  .mapbox {
    position: absolute;
    left: 5px;
    bottom: 7px;
    display: flex;
    align-items: center;
    gap: 1px;
  }

  .mapbox span {
    font-family: "Liberation Sans", sans-serif;
    font-size: 15px;
    font-weight: 700;
    color: #fff;
    -webkit-text-stroke: 1px #a0a0a0;
    line-height: 1;
  }

  .legend {
    position: absolute;
    right: 9px;
    top: 401px;
    width: 153px;
    height: 173px;
    box-sizing: border-box;
    padding: 12px 14px 0;
    background: #fff;
    border-radius: 4px;
    box-shadow: 0 2px 8px rgba(0, 0, 0, 0.3);
  }

  .legend-title {
    font-size: 11px;
    letter-spacing: 0.45px;
    color: #333;
    line-height: 13px;
    margin-bottom: 11px;
  }

  .legend-row {
    display: flex;
    align-items: center;
    padding-left: 4px;
    margin-bottom: 5px;
    height: 16px;
  }

  .legend-row.tall {
    height: 17px;
    margin-bottom: 6px;
  }

  .swatch {
    width: 16px;
    height: 100%;
    flex: none;
  }

  .legend-label {
    margin-left: 5px;
    font-size: 11px;
    font-weight: 700;
    letter-spacing: 0.25px;
    color: #222;
  }

  .attrib {
    position: absolute;
    right: 0;
    bottom: 0;
    height: 18px;
    padding: 0 4px 0 5px;
    display: flex;
    align-items: center;
    gap: 5px;
    background: rgba(255, 255, 255, 0.5);
    color: #3a3a3a;
    font-size: 11.6px;
    white-space: nowrap;
    letter-spacing: 0.3px;
  }

  .attrib b {
    margin-left: 1px;
    font-weight: 600;
  }
</style>
